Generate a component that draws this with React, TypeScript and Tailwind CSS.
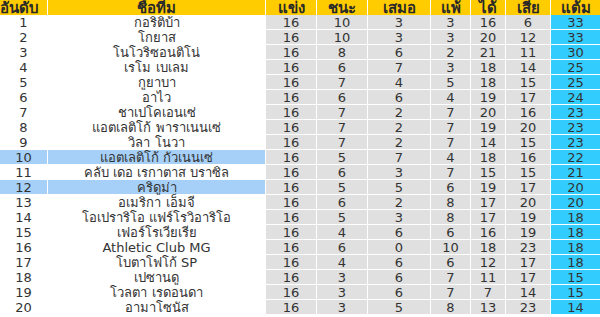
import React from 'react';

type Row = [number, string, number, number, number, number, number, number, number];

const rows: Row[] = [
  [1, 'กอริติบ้า', 16, 10, 3, 3, 16, 6, 33],
  [2, 'โกยาส', 16, 10, 3, 3, 20, 12, 33],
  [3, 'โนโวริซอนติโน่', 16, 8, 6, 2, 21, 11, 30],
  [4, 'เรโม เบเลม', 16, 6, 7, 3, 18, 14, 25],
  [5, 'กูยาบา', 16, 7, 4, 5, 18, 15, 25],
  [6, 'อาไว', 16, 6, 6, 4, 19, 17, 24],
  [7, 'ชาเปโคเอนเซ่', 16, 7, 2, 7, 20, 16, 23],
  [8, 'แอตเลติโก้ พาราเนนเซ่', 16, 7, 2, 7, 19, 20, 23],
  [9, 'วิลา โนวา', 16, 7, 2, 7, 14, 15, 23],
  [10, 'แอตเลติโก้ กัวเนนเซ่', 16, 5, 7, 4, 18, 16, 22],
  [11, 'คลับ เดอ เรกาตาส บราซิล', 16, 6, 3, 7, 15, 15, 21],
  [12, 'คริดูม่า', 16, 5, 5, 6, 19, 17, 20],
  [13, 'อเมริกา เอ็มจี', 16, 6, 2, 8, 17, 20, 20],
  [14, 'โอเปราริโอ แฟร์โรวิอาริโอ', 16, 5, 3, 8, 17, 19, 18],
  [15, 'เฟอร์โรเวียเรีย', 16, 4, 6, 6, 16, 19, 18],
  [16, 'Athletic Club MG', 16, 6, 0, 10, 18, 23, 18],
  [17, 'โบตาโฟโก้ SP', 16, 4, 6, 6, 12, 17, 18],
  [18, 'เปซานดู', 16, 3, 6, 7, 11, 17, 15],
  [19, 'โวลตา เรดอนดา', 16, 3, 6, 7, 7, 14, 15],
  [20, 'อามาโซนัส', 16, 3, 5, 8, 13, 23, 14],
];

const headers = ['อันดับ', 'ชื่อทีม', 'แข่ง', 'ชนะ', 'เสมอ', 'แพ้', 'ได้', 'เสีย', 'แต้ม'];

// rows 10 and 12 get the blue band
const highlighted = [10, 12];

export default function App() {
  return (
    <div
      className="w-[600px] h-[317px] bg-white text-[13px] leading-none text-[#333]"
      style={{ fontFamily: "Tahoma, 'DejaVu Sans', 'Noto Sans', sans-serif" }}
    >
      <div className="grid grid-cols-[47px_217px_50px_50px_62px_39px_34px_44px_49px] gap-px auto-rows-[14px]">
        {headers.map((h, i) => (
          <div
            key={h}
            className={`h-[15px] bg-[#ffcc00] text-[15px] leading-[13px] font-bold text-[#2a2a2a] flex items-end whitespace-nowrap ${i === 0 ? 'justify-start' : 'justify-center'}`}
          >
            <span>{h}</span>
          </div>
        ))}
        {rows.map((r) => {
          const hl = highlighted.includes(r[0]);
          return (
            <React.Fragment key={r[0]}>
              <div className={`flex items-center justify-center ${hl ? 'bg-[#a6d0f7]' : 'bg-white'}`}>{r[0]}</div>
              <div className={`flex items-center justify-center whitespace-nowrap ${hl ? 'bg-[#a6d0f7]' : 'bg-white'}`}>{r[1]}</div>
              {r.slice(2, 8).map((v, j) => (
                <div key={j} className="flex items-center justify-center bg-[#e0e0e0]">
                  {v}
                </div>
              ))}
              <div className="flex items-center justify-center bg-[#33ccff]">{r[8]}</div>
            </React.Fragment>
          );
        })}
      </div>
    </div>
  );
}
